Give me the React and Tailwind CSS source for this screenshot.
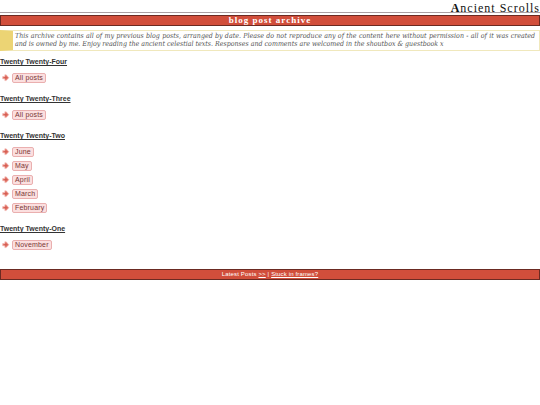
import React from 'react';

const ARCHIVE = [
  { year: 'Twenty Twenty-Four', posts: ['All posts'] },
  { year: 'Twenty Twenty-Three', posts: ['All posts'] },
  { year: 'Twenty Twenty-Two', posts: ['June', 'May', 'April', 'March', 'February'] },
  { year: 'Twenty Twenty-One', posts: ['November'] },
];

const ArrowBullet = () => (
  <svg className="h-2 w-2 shrink-0" viewBox="0 0 8 8" aria-hidden="true">
    <path
      d="M0.6 2.6H2.8V0.8h1.4L6.9 3.7 4.2 6.6H2.8V4.8H0.6z"
      fill="#e57f74"
      stroke="#f3b9b2"
      strokeWidth="0.5"
    />
    <path d="M1.8 3.7h3.8M3.9 2.2v3" stroke="#d0584b" strokeWidth="0.8" />
  </svg>
);

const YearSection = ({ year, posts }) => (
  <section>
    <h2 className="text-[7px] leading-[10px] font-bold text-[#333333] underline">{year}</h2>
    <ul className="mt-1.5 flex flex-col gap-1">
      {posts.map((post) => (
        <li key={post} className="flex h-2.5 items-center gap-0.5 pl-0.5">
          <ArrowBullet />
          <a
            href="#"
            className="rounded-[2px] border border-[#eaafaf] bg-[#fbdfdf] px-0.5 text-[7px] leading-[8px] tracking-wide text-[#7a3535]"
          >
            {post}
          </a>
        </li>
      ))}
    </ul>
  </section>
);

const App = () => (
  <div className="min-h-screen bg-white font-['Liberation_Sans',Arial,sans-serif]">
    <header>
      <h1 className="border-b border-[#aaa0a4] pt-1 text-right font-['Liberation_Serif',serif] text-[12px] leading-[8px] tracking-[1px] text-[#111111]">
        <span className="font-bold">A</span>ncient Scrolls
      </h1>
      <p className="mt-0.5 border border-[#6b2a22] bg-[#d14e3b] text-center font-['Liberation_Serif',serif] text-[9px] leading-[9px] font-bold tracking-[1px] text-white">
        blog post archive
      </p>
    </header>

    <main>
      <p className="mt-1 border border-l-[13px] border-[#f0e8bc] border-l-[#ecd474] pt-px pr-1 pb-0.5 pl-0.5 text-justify font-['DejaVu_Serif_Condensed','DejaVu_Serif',serif] text-[7px] leading-[8px] text-[#555555] italic">
        This archive contains all of my previous blog posts, arranged by date. Please do not
        reproduce any of the content here without permission - all of it was created and is owned by
        me. Enjoy reading the ancient celestial texts. Responses and comments are welcomed in the
        shoutbox &amp; guestbook x
      </p>
      <div className="mt-1.5 flex flex-col gap-[11px]">
        {ARCHIVE.map((section) => (
          <YearSection key={section.year} {...section} />
        ))}
      </div>
    </main>

    <footer className="mt-[19px] border border-[#6b2a22] bg-[#d14e3b] text-center text-[6px] leading-[9px] tracking-wide text-white">
      Latest Posts{' '}
      <a href="#" className="underline">
        &gt;&gt;
      </a>{' '}
      |{' '}
      <a href="#" className="underline">
        Stuck in frames?
      </a>
    </footer>
  </div>
);

export default App;
